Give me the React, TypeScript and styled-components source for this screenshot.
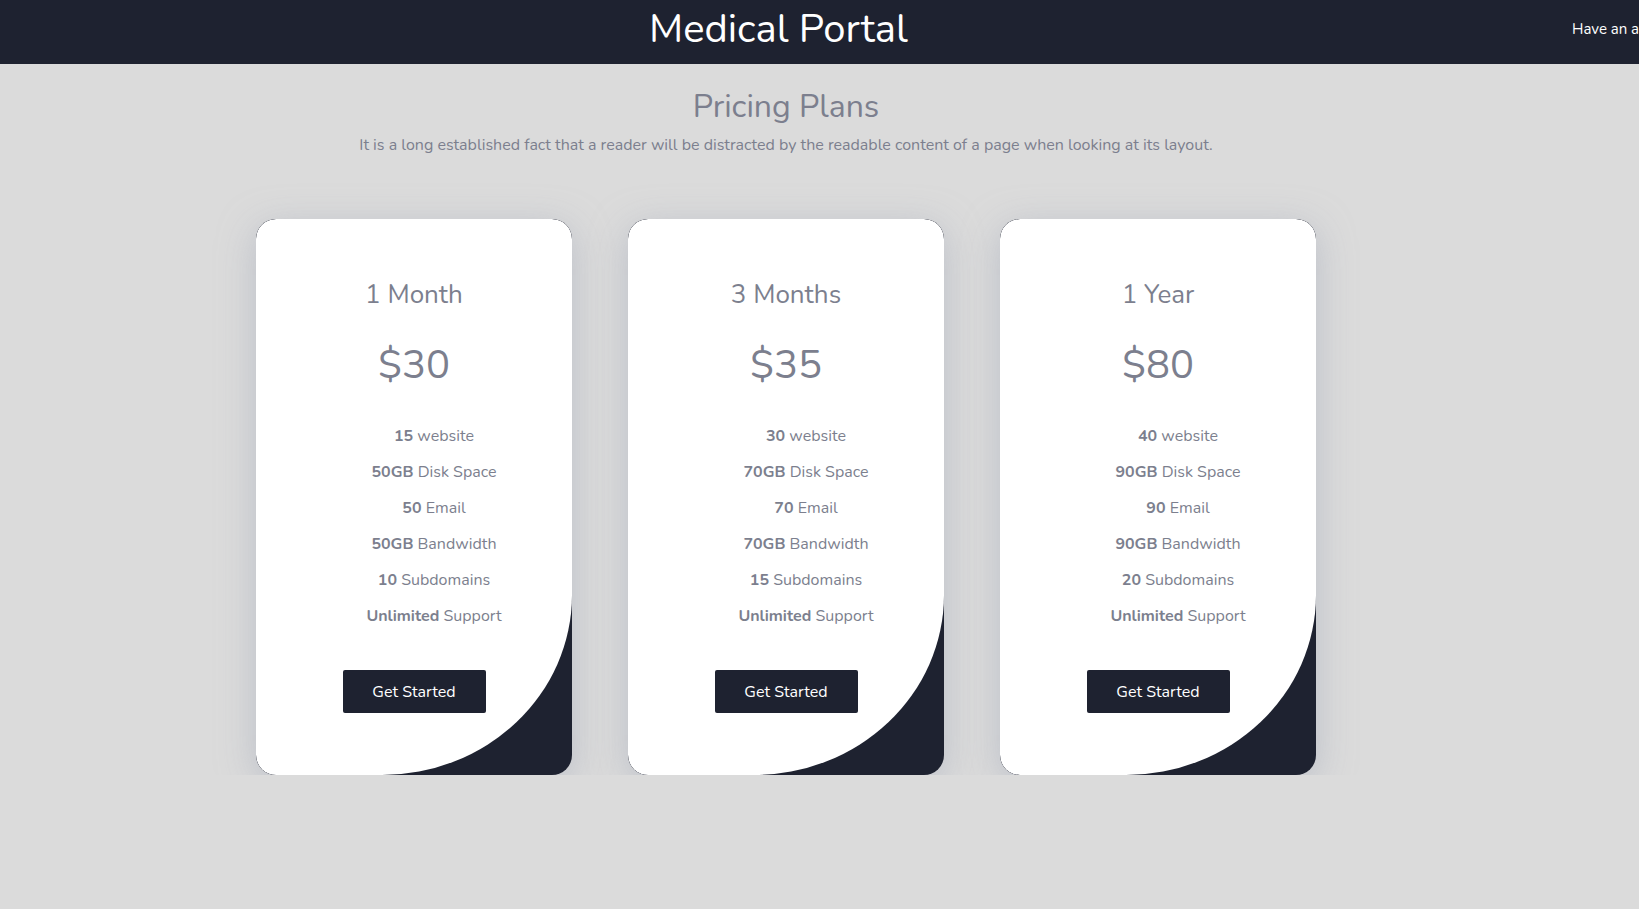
import * as React from 'react'
import styled, { createGlobalStyle } from 'styled-components'

const GlobalStyle = createGlobalStyle`
  html, body {
    margin: 0;
    padding: 0;
    background: #dbdbdb;
    font-family: 'Nunito', 'Lato', 'Noto Sans', sans-serif;
    overflow: hidden;
  }
`

const plans = [
  {
    name: '1 Month',
    price: '$30',
    features: [
      ['15', 'website'],
      ['50GB', 'Disk Space'],
      ['50', 'Email'],
      ['50GB', 'Bandwidth'],
      ['10', 'Subdomains'],
      ['Unlimited', 'Support']
    ]
  },
  {
    name: '3 Months',
    price: '$35',
    features: [
      ['30', 'website'],
      ['70GB', 'Disk Space'],
      ['70', 'Email'],
      ['70GB', 'Bandwidth'],
      ['15', 'Subdomains'],
      ['Unlimited', 'Support']
    ]
  },
  {
    name: '1 Year',
    price: '$80',
    features: [
      ['40', 'website'],
      ['90GB', 'Disk Space'],
      ['90', 'Email'],
      ['90GB', 'Bandwidth'],
      ['20', 'Subdomains'],
      ['Unlimited', 'Support']
    ]
  }
]

export default function App() {
  return (
    <>
      <GlobalStyle />
      <Header>
        <Brand>Medical Portal</Brand>
        <HeaderLink>Have an account? Login</HeaderLink>
      </Header>
      <Main>
        <Heading>Pricing Plans</Heading>
        <Lead>
          It is a long established fact that a reader will be distracted by the readable content of a page when
          looking at its layout.
        </Lead>
        <Cards>
          {plans.map((plan) => (
            <Card key={plan.name}>
              <CardFace>
                <PlanName>{plan.name}</PlanName>
                <Price>{plan.price}</Price>
                <Features>
                  {plan.features.map(([value, label]) => (
                    <li key={label}>
                      <b>{value}</b> {label}
                    </li>
                  ))}
                </Features>
                <Button>Get Started</Button>
              </CardFace>
            </Card>
          ))}
        </Cards>
      </Main>
    </>
  )
}

const Header = styled.header`
  display: flex;
  align-items: center;
  height: 64px;
  background: #1e2230;
  padding-left: 649px;
  overflow: hidden;
  white-space: nowrap;
`

const Brand = styled.h1`
  margin: 0 0 6px;
  font-size: 40px;
  font-weight: 400;
  line-height: 56px;
  color: #ffffff;
`

const HeaderLink = styled.a`
  margin: 0 0 6px auto;
  flex-shrink: 0;
  width: 67px;
  overflow: visible;
  font-size: 15px;
  color: #ffffff;
`

const Main = styled.main`
  width: 1572px;
  display: flex;
  flex-direction: column;
  align-items: center;
`

const Heading = styled.h2`
  margin: 24px 0 0;
  font-size: 32px;
  font-weight: 400;
  line-height: 38px;
  color: #7c7f8e;
`

const Lead = styled.p`
  margin: 8px 0 0;
  font-size: 16px;
  line-height: 23px;
  color: #7c7f8e;
`

const Cards = styled.div`
  display: flex;
  gap: 56px;
  margin-top: 62px;
`

const Card = styled.div`
  width: 316px;
  height: 556px;
  border-radius: 20px;
  background: #1e2230;
  overflow: hidden;
  box-shadow: 0 8px 36px rgba(160, 168, 184, 0.55);
`

const CardFace = styled.div`
  height: 100%;
  box-sizing: border-box;
  display: flex;
  flex-direction: column;
  align-items: center;
  padding-top: 61px;
  background: #ffffff;
  border-radius: 20px 20px 190px 20px / 20px 20px 180px 20px;
`

const PlanName = styled.h3`
  margin: 0;
  font-size: 26px;
  font-weight: 400;
  line-height: 30px;
  color: #7c7f8e;
`

const Price = styled.div`
  margin-top: 31px;
  font-size: 40px;
  line-height: 48px;
  color: #7c7f8e;
`

const Features = styled.ul`
  list-style: none;
  margin: 29px 0 0;
  padding: 0 0 0 40px;
  text-align: center;

  li {
    font-size: 16px;
    line-height: 36px;
    color: #7c7f8e;
  }

  b {
    font-weight: 700;
  }
`

const Button = styled.button`
  margin-top: 36px;
  width: 143px;
  height: 43px;
  border: none;
  border-radius: 2px;
  background: #1e2230;
  color: #ffffff;
  font-family: inherit;
  font-size: 16px;
`
